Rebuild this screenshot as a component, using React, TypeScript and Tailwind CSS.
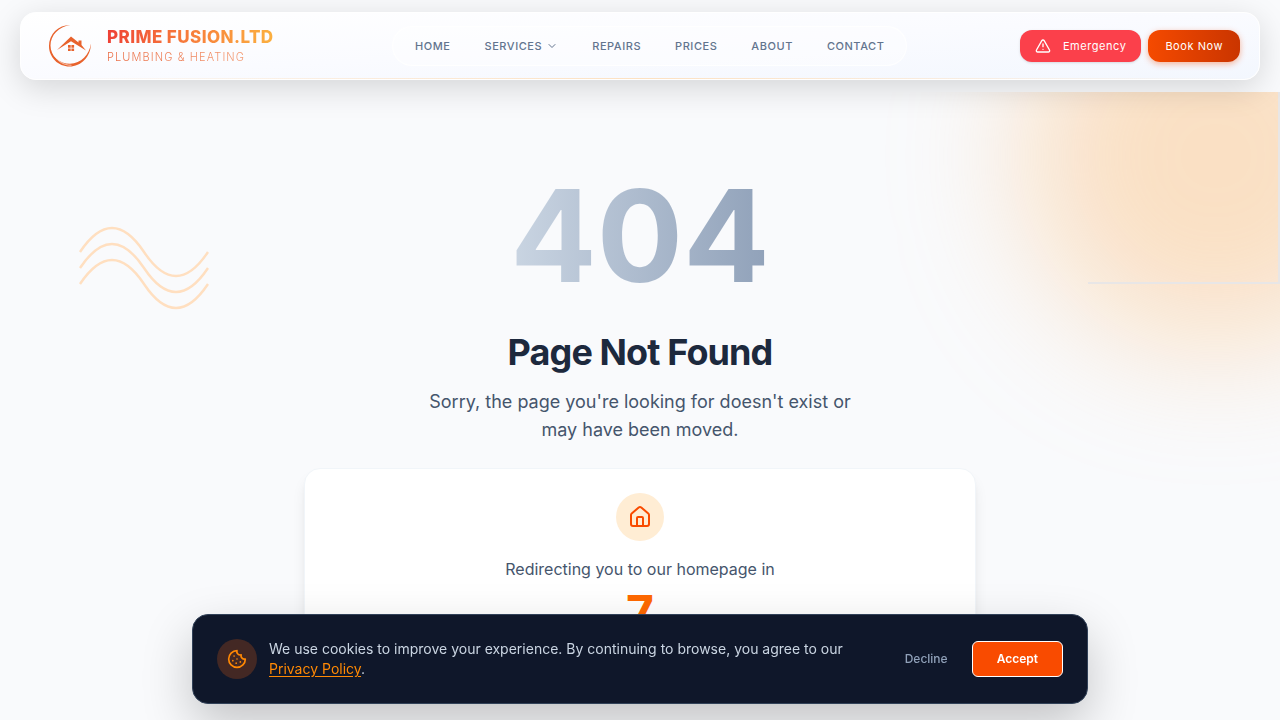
import { useState } from "react";
import { ChevronDown, Cookie, House, TriangleAlert } from "lucide-react";

const navItems = [
  { label: "Home", href: "#home" },
  { label: "Services", href: "#services", hasMenu: true },
  { label: "Repairs", href: "#repairs" },
  { label: "Prices", href: "#prices" },
  { label: "About", href: "#about" },
  { label: "Contact", href: "#contact" },
];

function LogoMark() {
  return (
    <svg viewBox="0 0 44 44" className="h-11 w-11" fill="#e8622c" aria-hidden="true">
      <path d="M22 .9A20.7 20.7 0 0 0 1 22c0 11.500 9.300 20.500 20.500 20.500C33 42.500 42.800 33 43 19.500 41.500 30.500 33 39.500 22 39.800 11.500 39.800 2.500 32 2.500 21.500 2.500 11 11 2.400 22 .9Z" />
      <path
        d="M4.500 27.500C7.500 36.500 15 41.300 23.500 41.300"
        fill="none"
        stroke="#fff"
        strokeWidth=".6"
      />
      <path d="M9 26 23 12.500l7.500 6V16.500h3v4.500L38 26.500 23 17.300Z" />
      <path d="M20 21h2.700v2.700H20zM23.400 21h2.700v2.700h-2.700zM20 24.400h2.700v2.700H20zM23.400 24.400h2.700v2.700h-2.700z" />
    </svg>
  );
}

function Header() {
  return (
    <header className="relative z-20 mx-5 mt-3 flex h-17 items-center justify-between rounded-2xl border border-white bg-linear-to-br from-white via-[#fafbff] to-[#f3f7fe] px-[19px] shadow-[0_8px_32px_rgba(0,0,0,0.15)]">
      <a href="#home" className="flex items-center gap-[15px] pl-2">
        <LogoMark />
        <span className="flex flex-col gap-0.5">
          <span className="bg-linear-to-r from-[#ee4036] to-[#fbb040] bg-clip-text text-[17px] leading-5 font-extrabold tracking-wide whitespace-nowrap text-transparent">
            PRIME FUSION.LTD
          </span>
          <span className="bg-linear-to-r from-[#e9683f] to-[#f4a077] bg-clip-text text-[11px] leading-4 font-light tracking-widest whitespace-nowrap text-transparent">
            PLUMBING &amp; HEATING
          </span>
        </span>
      </a>

      <nav className="ml-1.5 flex h-10 items-center gap-0.5 rounded-full border border-white/80 bg-white/40 px-1.5">
        {navItems.map((item) => (
          <a
            key={item.label}
            href={item.href}
            className="flex items-center gap-1 px-4 text-[11px] font-medium tracking-wider text-slate-500 uppercase"
          >
            {item.label}
            {item.hasMenu ? <ChevronDown className="h-3 w-3" /> : null}
          </a>
        ))}
      </nav>

      <div className="flex items-center justify-end gap-[7px]">
        <button className="flex h-8 items-center gap-3 rounded-xl bg-[#fb404b] px-[15px] text-[11px] tracking-wider text-white shadow-sm">
          <TriangleAlert className="h-4 w-4" />
          Emergency
        </button>
        <button className="h-8 rounded-xl bg-linear-to-r from-[#f54a00] to-[#ca3500] px-[17px] text-[11px] tracking-wider text-white shadow-[0_2px_6px_rgba(245,74,0,0.4)]">
          Book Now
        </button>
      </div>

      <div className="absolute inset-x-0 bottom-0 h-px bg-linear-to-r from-transparent via-orange-200/70 to-transparent" />
    </header>
  );
}

function Backdrop() {
  return (
    <div className="pointer-events-none absolute inset-0 overflow-hidden" aria-hidden="true">
      <div className="absolute -top-32 -right-32 h-96 w-96 rounded-full bg-[#fdb870]/40 blur-3xl" />
      <div className="absolute top-0 right-0 h-48 w-48 border-r-2 border-b-2 border-[#e8e6e6]" />
      <svg
        viewBox="0 0 128 96"
        className="absolute top-32 left-20 h-24 w-32 overflow-visible"
        fill="none"
        stroke="#ffdfc0"
        strokeWidth="2.400"
      >
        <path d="M0 32Q32-16 64 32T128 32" />
        <path d="M0 48Q32 0 64 48T128 48" />
        <path d="M0 64Q32 16 64 64T128 64" />
      </svg>
    </div>
  );
}

function CookieBanner({ onClose }: { onClose: () => void }) {
  return (
    <section
      aria-label="Cookie notice"
      className="fixed inset-x-4 bottom-4 z-30 mx-auto flex max-w-4xl items-center gap-3 rounded-2xl border border-slate-700 bg-[#0f172a] p-6 shadow-[0_20px_50px_rgba(0,0,0,0.22)]"
    >
      <span className="flex h-10 w-10 shrink-0 items-center justify-center rounded-full bg-[#432824]">
        <Cookie className="h-5 w-5 text-[#ff8904]" />
      </span>
      <p className="flex-1 text-sm leading-5 text-slate-300">
        We use cookies to improve your experience. By continuing to browse, you agree to our{" "}
        <a href="#privacy" className="text-[#ff8904] underline underline-offset-2">
          Privacy Policy
        </a>
        .
      </p>
      <div className="flex items-center gap-2">
        <button onClick={onClose} className="h-9 px-4 text-xs font-medium text-slate-400">
          Decline
        </button>
        <button
          onClick={onClose}
          className="h-9 rounded-md border border-white bg-[#f94b00] px-6 text-xs font-semibold text-white"
        >
          Accept
        </button>
      </div>
    </section>
  );
}

export default function App() {
  const [showCookies, setShowCookies] = useState(true);

  return (
    <div className="flex min-h-screen flex-col overflow-x-hidden bg-[#f9fafc] font-['Inter',sans-serif]">
      <Header />
      <main className="relative mt-3 flex flex-1 flex-col items-center px-4 pt-20 pb-6 text-center">
        <Backdrop />
        <div className="relative flex w-full max-w-2xl flex-col items-center">
          <h1 className="bg-linear-to-r from-slate-300 to-slate-400 bg-clip-text text-9xl font-bold text-transparent">
            404
          </h1>
          <h2 className="mt-8 text-4xl font-bold tracking-tight text-slate-800">Page Not Found</h2>
          <p className="mt-4 max-w-md text-lg leading-7 text-slate-600">
            Sorry, the page you're looking for doesn't exist or may have been moved.
          </p>

          <div className="mt-6 flex w-full flex-col items-center rounded-2xl border border-slate-100 bg-white px-6 pt-6 pb-12 shadow-lg">
            <span className="flex h-12 w-12 items-center justify-center rounded-full bg-[#ffedd4]">
              <House className="h-6 w-6 text-[#f94b00]" />
            </span>
            <p className="mt-4 text-base text-slate-600">Redirecting you to our homepage in</p>
            <p className="mt-2 text-5xl leading-12 font-bold text-[#ff6900]">7</p>
          </div>
        </div>
      </main>
      {showCookies ? <CookieBanner onClose={() => setShowCookies(false)} /> : null}
    </div>
  );
}
